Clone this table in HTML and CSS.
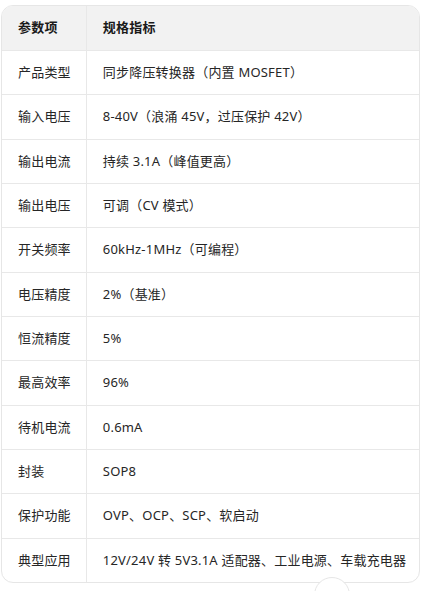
FILE: index.html
```html
<!DOCTYPE html>
<html lang="zh">
<head>
<meta charset="utf-8">
<link rel="stylesheet" href="styles.css">
</head>
<body>
<div class="page">
  <div class="table-wrap">
    <table class="spec">
      <thead>
        <tr><th class="c1">参数项</th><th>规格指标</th></tr>
      </thead>
      <tbody>
        <tr><td class="c1">产品类型</td><td>同步降压转换器（内置 MOSFET）</td></tr>
        <tr><td class="c1">输入电压</td><td>8-40V（浪涌 45V，过压保护 42V）</td></tr>
        <tr><td class="c1">输出电流</td><td>持续 3.1A（峰值更高）</td></tr>
        <tr><td class="c1">输出电压</td><td>可调（CV 模式）</td></tr>
        <tr><td class="c1">开关频率</td><td>60kHz-1MHz（可编程）</td></tr>
        <tr><td class="c1">电压精度</td><td>2%（基准）</td></tr>
        <tr><td class="c1">恒流精度</td><td>5%</td></tr>
        <tr><td class="c1">最高效率</td><td>96%</td></tr>
        <tr><td class="c1">待机电流</td><td>0.6mA</td></tr>
        <tr><td class="c1">封装</td><td>SOP8</td></tr>
        <tr><td class="c1">保护功能</td><td>OVP、OCP、SCP、软启动</td></tr>
        <tr><td class="c1">典型应用</td><td>12V/24V 转 5V3.1A 适配器、工业电源、车载充电器</td></tr>
      </tbody>
    </table>
  </div>
  <div class="scroll-btn"></div>
</div>
</body>
</html>
```

FILE: styles.css
```css
html, body {
  margin: 0;
  padding: 0;
  background: #ffffff;
}
body {
  font-family: "Noto Sans", "Noto Sans CJK SC", sans-serif;
  font-size: 13px;
  color: #262626;
}
.page {
  position: relative;
  padding: 5px 5px 0 1px;
  height: 586px;
  overflow: hidden;
}
.table-wrap {
  border: 1px solid #e6e6e6;
  border-radius: 12px;
  overflow: hidden;
  width: 417px;
}
.spec {
  width: 100%;
  border-collapse: separate;
  border-spacing: 0;
}
.spec th, .spec td {
  text-align: left;
  padding: 12px 15px 12px 16px;
  line-height: 19.33px;
  white-space: nowrap;
  letter-spacing: 0.2px;
  border-bottom: 1px solid #e8e8e8;
}
.spec th {
  background: #f2f2f2;
  font-weight: 700;
  color: #1a1a1a;
  padding-top: 12px;
  padding-bottom: 12px;
  height: 20px;
}
.spec tbody tr:last-child td {
  border-bottom: none;
}
.spec .c1 {
  width: 52px;
  border-right: 1px solid #e8e8e8;
}
.scroll-btn {
  position: absolute;
  left: 314px;
  top: 577px;
  width: 36px;
  height: 36px;
  border-radius: 50%;
  background: #ffffff;
  border: 1px solid #e6e6e6;
  box-sizing: border-box;
}
```
